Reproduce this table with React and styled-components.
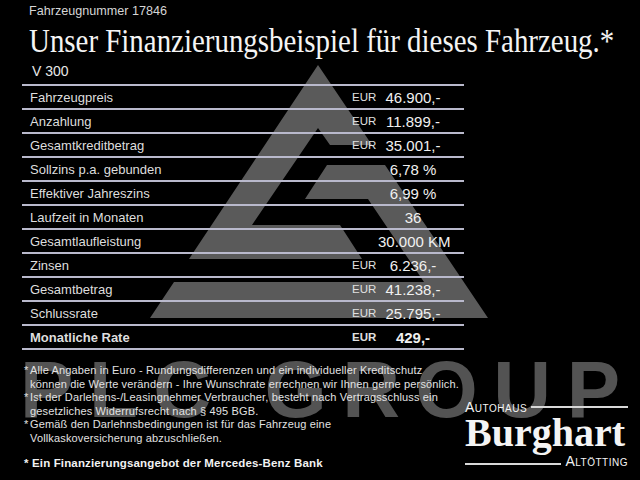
import React from 'react';
import styled, { createGlobalStyle } from 'styled-components';

const GlobalStyle = createGlobalStyle`
  html, body {
    margin: 0;
    padding: 0;
    background: #000;
  }
`;

const Page = styled.div`
  position: relative;
  width: 640px;
  height: 480px;
  overflow: hidden;
  background: #000;
  color: #e6e6e6;
  font-family: "Liberation Sans", Arial, sans-serif;
`;

// watermark of the dealer group, sits behind everything
const Watermark = styled.svg`
  position: absolute;
  left: 0;
  top: 0;
  z-index: 0;
`;

const Content = styled.div`
  position: relative;
  z-index: 1;
  display: flex;
  flex-direction: column;
  height: 100%;
`;

const Header = styled.header`
  padding: 4px 0 0 29px;
`;

const VehicleNo = styled.div`
  font-size: 12.6px;
  line-height: 14px;
  color: #d6d6d6;
`;

const Title = styled.h1`
  margin: 2px 0 0;
  font-family: "Liberation Serif", "Times New Roman", serif;
  font-weight: 400;
  font-size: 33px;
  line-height: 42px;
  color: #f4f4f4;
  white-space: nowrap;
  transform: scaleX(0.876);
  transform-origin: left center;
`;

const Model = styled.div`
  padding-left: 3px;
  font-size: 14px;
  line-height: 18px;
  color: #e8e8e8;
`;

const Table = styled.div`
  margin: 4px 0 0 22px;
  width: 442px;
  border-top: 2px solid #b9b9cc;
`;

const Row = styled.div`
  display: grid;
  grid-template-columns: 1fr 26px 70px 16px;
  align-items: center;
  height: 22px;
  border-bottom: 2px solid #b9b9cc;
  font-weight: ${({ $bold }) => ($bold ? 700 : 400)};
`;

const Label = styled.span`
  padding-left: 8px;
  font-size: 13px;
  padding-top: 1px;
  color: #dedede;
`;

const Unit = styled.span`
  font-size: 11.5px;
  color: #e0e0e0;
`;

const Value = styled.span`
  text-align: center;
  font-size: 15px;
  white-space: nowrap;
  color: #f0f0f0;
`;

const Footer = styled.div`
  flex: 1;
  display: flex;
  margin-top: 14px;
  padding-left: 24px;
`;

const Notes = styled.div`
  width: 441px;
  font-size: 11px;
  line-height: 13.5px;
  letter-spacing: 0.15px;
  color: #e2e2e2;
`;

const Note = styled.div`
  display: flex;
`;

const Star = styled.span`
  width: 6px;
  flex: none;
`;

const Lines = styled.div`
  white-space: nowrap;
`;

const BankLine = styled.div`
  margin-top: 12px;
  font-size: 11.5px;
  font-weight: 700;
  color: #f2f2f2;
  white-space: nowrap;
`;

const Logo = styled.div`
  align-self: flex-end;
  display: flex;
  flex-direction: column;
  width: 163px;
  margin-bottom: 11px;
  color: #f4f4f4;
`;

const LogoRow = styled.div`
  display: flex;
  align-items: center;
  gap: 4px;
  height: ${({ $h }) => $h}px;
`;

const SmallCaps = styled.span`
  font-size: 14px;
  font-variant: small-caps;
  letter-spacing: 0.5px;
  line-height: 1;
`;

const Rule = styled.span`
  flex: 1;
  height: 2px;
  background: #d8d8d8;
  margin-top: ${({ $offset }) => $offset || 0}px;
`;

const Brand = styled.div`
  font-family: "Liberation Serif", "Times New Roman", serif;
  font-weight: 700;
  font-size: 40px;
  line-height: 40px;
  height: 40px;
`;

const rows = [
  { label: 'Fahrzeugpreis', unit: 'EUR', value: '46.900,-' },
  { label: 'Anzahlung', unit: 'EUR', value: '11.899,-' },
  { label: 'Gesamtkreditbetrag', unit: 'EUR', value: '35.001,-' },
  { label: 'Sollzins p.a. gebunden', value: '6,78 %' },
  { label: 'Effektiver Jahreszins', value: '6,99 %' },
  { label: 'Laufzeit in Monaten', value: '36' },
  { label: 'Gesamtlaufleistung', value: '30.000 KM' },
  { label: 'Zinsen', unit: 'EUR', value: '6.236,-' },
  { label: 'Gesamtbetrag', unit: 'EUR', value: '41.238,-' },
  { label: 'Schlussrate', unit: 'EUR', value: '25.795,-' },
  { label: 'Monatliche Rate', unit: 'EUR', value: '429,-', bold: true },
];

const notes = [
  [
    'Alle Angaben in Euro - Rundungsdifferenzen und ein individueller Kreditschutz',
    'können die Werte verändern - Ihre Wunschrate errechnen wir Ihnen gerne persönlich.',
  ],
  [
    'Ist der Darlehens-/Leasingnehmer Verbraucher, besteht nach Vertragsschluss ein',
    'gesetzliches Widerrufsrecht nach § 495 BGB.',
  ],
  [
    'Gemäß den Darlehnsbedingungen ist für das Fahrzeug eine',
    'Vollkaskoversicherung abzuschließen.',
  ],
];

function GroupMark() {
  return (
    <Watermark width="640" height="480" viewBox="0 0 640 480">
      <g fill="#5a5a5a">
        <path d="M318 65 L372 145 L330 145 L318 128 L252 225 L340 225 L362 259 L189 259 Z" />
        <path d="M327 165 L385 165 L488 318 L150 318 L174 282 L424 282 L368 199 L305 199 Z" />
      </g>
      <text
        x="20"
        y="417"
        fill="#535353"
        fontFamily="Liberation Sans, Arial, sans-serif"
        fontWeight="700"
        fontSize="80"
        textLength="600"
        lengthAdjust="spacing"
      >
        PLC GROUP
      </text>
    </Watermark>
  );
}

export default function App() {
  return (
    <>
      <GlobalStyle />
      <Page>
        <GroupMark />
        <Content>
          <Header>
            <VehicleNo>Fahrzeugnummer 17846</VehicleNo>
            <Title>Unser Finanzierungsbeispiel für dieses Fahrzeug.*</Title>
            <Model>V 300</Model>
          </Header>

          <Table>
            {rows.map((r) => (
              <Row key={r.label} $bold={r.bold}>
                <Label>{r.label}</Label>
                <Unit>{r.unit}</Unit>
                <Value>{r.value}</Value>
                <span />
              </Row>
            ))}
          </Table>

          <Footer>
            <Notes>
              {notes.map((lines) => (
                <Note key={lines[0]}>
                  <Star>*</Star>
                  <Lines>
                    {lines.map((l) => (
                      <div key={l}>{l}</div>
                    ))}
                  </Lines>
                </Note>
              ))}
              <BankLine>* Ein Finanzierungsangebot der Mercedes-Benz Bank</BankLine>
            </Notes>

            <Logo>
              <LogoRow $h={13}>
                <SmallCaps>Autohaus</SmallCaps>
                <Rule />
              </LogoRow>
              <Brand>Burghart</Brand>
              <LogoRow $h={16}>
                <Rule $offset={6} />
                <SmallCaps>Altötting</SmallCaps>
              </LogoRow>
            </Logo>
          </Footer>
        </Content>
      </Page>
    </>
  );
}
